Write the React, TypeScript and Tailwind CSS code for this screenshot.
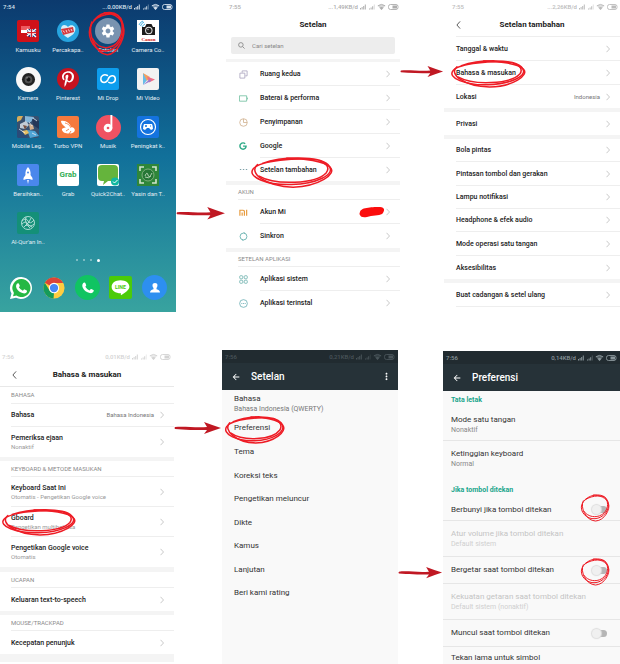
import React from "react";
import { FaPinterestP, FaGoogle } from "react-icons/fa";
import { MdSettings, MdArrowBack, MdMoreVert } from "react-icons/md";

function StatusBar({ time, speed, className }: { time: string; speed: string; className: string }) {
  return (
    <div className={"flex h-[13px] items-center text-[6px] leading-[8px] font-medium " + className}>
      <span className="flex-1">{time}</span>
      <span className="mr-px whitespace-nowrap">{speed}</span>
      <svg viewBox="0 0 40 8" className="h-2 w-10 shrink-0" fill="currentColor" aria-hidden="true">
        <path d="M1 6.5V5h1v1.5zM2.6 6.5V4h1v2.5zM4.2 6.5V3h1v3.5zM5.8 6.5V1.5h1v5z" />
        <path d="M10 6.5V5.5h1v1zM11.6 6.5V4.5h1v2zM13.2 6.5V3.2h1v3.3z" />
        <path d="M14.8 6.5V1.500h1v5z" opacity=".4" />
        <path d="M22.5 7 18.8 2.8Q22.5 0 26.2 2.8z" opacity=".5" />
        <path d="M22.5 7 20.5 4.8Q22.5 3.4 24.5 4.8z" />
        <path d="M18.8 2.8Q22.5 0 26.2 2.8" fill="none" stroke="currentColor" strokeWidth=".9" />
        <rect x="29.5" y="1.500" width="9.500" height="5" rx="2" fill="none" stroke="currentColor" strokeWidth=".9" />
        <rect x="33.5" y="2.500" width="4.500" height="3" />
      </svg>
    </div>
  );
}

function Scribble({ className, thin }: { className: string; thin?: boolean }) {
  return (
    <svg
      viewBox="0 0 100 100"
      preserveAspectRatio="none"
      className={"pointer-events-none absolute z-10 overflow-visible " + className}
      fill="none"
      stroke="#ee1c25"
      strokeWidth={thin ? 1 : 1.5}
      strokeLinecap="round"
      aria-hidden="true"
    >
      <path vectorEffect="non-scaling-stroke" d="M14 22C38-3 84-4 95 26C108 62 78 93 50 95C20 98-6 68 3 40C12 12 56 2 82 10" />
      <path vectorEffect="non-scaling-stroke" d="M8 26C-4 54 18 102 52 104C84 102 106 58 98 36C92 14 64 4 44 4" />
      <path vectorEffect="non-scaling-stroke" d="M10 66C30 98 80 94 93 54C98 34 92 20 84 12" />
    </svg>
  );
}

function Arrow() {
  return (
    <svg viewBox="0 0 48 14" className="w-full" aria-hidden="true">
      <path d="M1 6C10 5 22 7 33 6L30 1Q38 4 47 7Q38 10 30 13L33 9C22 9 10 9 1 8Q0 7 1 6z" fill="#c01823" />
    </svg>
  );
}

function Chevron() {
  return (
    <svg viewBox="0 0 4 8" className="h-2 w-1 shrink-0" fill="none" stroke="#c3c3c3" strokeWidth=".9" aria-hidden="true">
      <path d="M.5.8 3.5 4 .5 7.2" />
    </svg>
  );
}

function BackChevron() {
  return (
    <button aria-label="Kembali" className="absolute left-3 flex h-3 w-2 items-center">
      <svg viewBox="0 0 6 10" className="h-2 w-[5px]" fill="none" stroke="#444" strokeWidth="1.1">
        <path d="M5 .5 1 5l4 4.5" />
      </svg>
    </button>
  );
}

function Band({ h = "h-1" }: { h?: string }) {
  return <div className={"bg-[#f4f4f4] " + h} />;
}

function SectionHead({ children, h = "h-4", pad = "ml-3" }: { children: React.ReactNode; h?: string; pad?: string }) {
  return (
    <h3 className={"flex items-center border-b border-[#eeeeee] text-[6px] leading-[8px] text-[#8a8a8a] " + h + " " + pad}>
      {children}
    </h3>
  );
}

type RowProps = {
  label: string;
  sub?: string;
  value?: React.ReactNode;
  h?: string;
  last?: boolean;
  pad?: string;
  icon?: React.ReactNode;
};

function Row({ label, sub, value, h = "h-6", last, pad = "pl-3", icon }: RowProps) {
  return (
    <li>
      <button className={"flex w-full text-left " + h + " " + pad}>
        {icon && <span className="flex h-full w-[22px] shrink-0 items-center">{icon}</span>}
        <span className={"flex h-full min-w-0 flex-1 items-center pr-[10px] " + (last ? "" : "border-b border-[#eeeeee]")}>
          <span className="flex-1 whitespace-nowrap text-[7px] leading-[10px] font-medium text-[#222]">
            {label}
            {sub && <span className="block text-[6px] leading-[8px] font-normal text-[#999]">{sub}</span>}
          </span>
          {value && <span className="mr-[6px] text-[6px] leading-[8px] text-[#777]">{value}</span>}
          <Chevron />
        </span>
      </button>
    </li>
  );
}

/* ---------- home screen ---------- */

function Tile({ className, children }: { className: string; children?: React.ReactNode }) {
  return <span className={"relative flex size-[22px] items-center justify-center overflow-hidden " + className}>{children}</span>;
}

const apps: { name: string; icon: React.ReactNode }[] = [
  {
    name: "Kamusku",
    icon: (
      <Tile className="rounded-xs bg-[#cf1119]">
        <svg viewBox="0 0 22 22" className="size-full">
          <path d="M4 6h9v4H4z" fill="#ee5a5e" /><path d="M4 10h9v4l-2-1H4z" fill="#fff" />
          <path d="M10 9h9v8h-7l-2-2z" fill="#263b80" />
          <path d="m10 9 9 8M19 9l-9 7" stroke="#fff" strokeWidth="1.5" />
          <path d="M14.5 9v8M10 12.7h9" stroke="#fff" strokeWidth="2.4" />
          <path d="M14.5 9v8M10 12.7h9" stroke="#d5222a" strokeWidth="1.2" />
        </svg>
      </Tile>
    ),
  },
  {
    name: "Percakapa..",
    icon: (
      <Tile className="rounded-full bg-[#27a4df]">
        <svg viewBox="0 0 22 22" className="size-full">
          <path d="M4 9C4 4 9 4 11 7C14 3 20 6 18 11C17 15 13 16 11 18C8 16 4 14 4 9z" fill="#d8eef8" />
          <path d="m4 9 12-2 1 5-11 3z" fill="#d43a3f" />
          <path d="m6 10.5 1.5 2M9 10l1 2.5M11.5 9.5l1 2M14 9l1 2" stroke="#fff" strokeWidth=".8" />
        </svg>
      </Tile>
    ),
  },
  {
    name: "Setelan",
    icon: (
      <span className="flex size-[26px] items-center justify-center rounded-full bg-[#7993b0]">
        <MdSettings className="size-4 text-white" />
      </span>
    ),
  },
  {
    name: "Camera Co..",
    icon: (
      <Tile className="bg-white">
        <svg viewBox="0 0 22 22" className="size-full">
          <path d="M2 5q1-3 4-4M3.5 6q1-3 3.5-4M5 7q1-2 3-3" fill="none" stroke="#36a9de" strokeWidth=".9" />
          <path d="M5 7h3l1.5-3h5L16 7h2v8H5z" fill="#1c1c1c" />
          <circle cx="11.8" cy="10.5" r="3.7" fill="#e6e6e6" /><circle cx="11.8" cy="10.5" r="2.7" fill="#222" /><circle cx="11" cy="9.5" r=".8" fill="#aaa" />
          <text x="11.5" y="20.7" textAnchor="middle" fontSize="5" fontWeight="bold" fontFamily="Liberation Serif, serif" fill="#d41920">Canon</text>
        </svg>
      </Tile>
    ),
  },
  {
    name: "Kamera",
    icon: (
      <span className="size-[25px]">
        <svg viewBox="0 0 26 26" className="size-full">
          <circle cx="13" cy="13" r="13" fill="#f8f8f8" /><circle cx="13" cy="13" r="6.8" fill="#222" />
          <circle cx="13" cy="13" r="4" fill="#505050" /><circle cx="13" cy="13" r="2" fill="#151515" /><circle cx="11.5" cy="11.3" r=".8" fill="#888" />
        </svg>
      </span>
    ),
  },
  {
    name: "Pinterest",
    icon: <Tile className="rounded-full bg-[#c7131f]"><FaPinterestP className="size-4 text-white" /></Tile>,
  },
  {
    name: "Mi Drop",
    icon: (
      <Tile className="rounded-xs bg-[#0d9ded]">
        <svg viewBox="0 0 22 22" className="size-full" fill="none" stroke="#fff" strokeWidth="1.5" strokeLinecap="round">
          <path d="M10.5 7.5C7 5.5 3.5 8 3.8 11.3C4.3 15.5 9.5 15.3 11 11.5C12.5 7 17.5 6.5 18.3 10.5C18.8 14 15 16 11.8 14.3" />
        </svg>
      </Tile>
    ),
  },
  {
    name: "Mi Video",
    icon: (
      <Tile className="rounded-xs bg-[#f2f2f2]">
        <svg viewBox="0 0 22 22" className="size-full">
          <path d="M6 5v12l5-6z" fill="#69bce8" /><path d="m6 5 7 4-3 4z" fill="#f3a15e" /><path d="m10 8.5 8 3-6 3z" fill="#ee6f86" /><path d="m6 17 7-6 1 2z" fill="#9a7dd1" />
        </svg>
      </Tile>
    ),
  },
  {
    name: "Mobile Leg..",
    icon: (
      <Tile className="rounded-xs bg-[#38506f]">
        <svg viewBox="0 0 22 22" className="size-full">
          <path d="M0 0h6l-2 4-4 2z" fill="#d5ad5c" /><path d="m8 0 9 1-3 5-6 1z" fill="#83b7db" /><path d="m15 3 7 2v8l-6-4z" fill="#253859" />
          <path d="m3 8 6-3 3 4-4 4-5-1z" fill="#c3ccd6" /><path d="m6 9 4 1-2 4z" fill="#765143" /><path d="m12 8 4 1 1 4-4 1z" fill="#d6b28f" />
          <path d="M0 14l7 1 4 7H0z" fill="#2a4b79" /><path d="m10 14 8 1 4 5-9 2z" fill="#4fa4d5" /><path d="m5 15 5-1 2 3-4 2z" fill="#e5bd62" /><path d="m16 2 4 3M2 13l6 4M12 6l3 4M15 17l4 2" stroke="#e8eef5" strokeWidth=".8" />
        </svg>
      </Tile>
    ),
  },
  {
    name: "Turbo VPN",
    icon: (
      <Tile className="rounded-xs bg-[#f57a3d]">
        <svg viewBox="0 0 22 22" className="size-full">
          <path d="M4 5C9 4 13 8 14 11C17 11 19 14 17 16C14 18.5 6 18 5 14C4.5 12.5 7 11.5 9 11.5C7 10 4 8 4 5z" fill="#fff" />
          <path d="M8 7c4 1 5 3 6 5M9 15l3-2M12 18l2-3" fill="none" stroke="#f57a3d" strokeWidth=".9" />
        </svg>
      </Tile>
    ),
  },
  {
    name: "Musik",
    icon: (
      <span className="size-[25px]">
        <svg viewBox="0 0 26 26" className="size-full">
          <circle cx="13" cy="13" r="13" fill="#ef5262" /><circle cx="12.5" cy="13.5" r="4.5" fill="#fff" /><circle cx="12.5" cy="13.5" r="1.4" fill="#ef5262" />
          <path d="M15 0h2v14h-2z" fill="#fff" />
        </svg>
      </span>
    ),
  },
  {
    name: "Peningkat k..",
    icon: (
      <Tile className="rounded-xs bg-[#1473df]">
        <svg viewBox="0 0 22 22" className="size-full" fill="none" stroke="#fff">
          <circle cx="11" cy="11" r="7.5" strokeWidth="1.2" /><path d="M7 8h8q1 2 1 5l-2 1-2-2h-2l-2 2-2-1q0-3 1-5z" fill="#fff" stroke="none" />
          <path d="M8 10h2M9 9v2M13 10h1" stroke="#1473df" />
        </svg>
      </Tile>
    ),
  },
  {
    name: "Bersihkan..",
    icon: (
      <Tile className="rounded-xs bg-[#4a87ec]">
        <svg viewBox="0 0 22 22" className="size-full">
          <path d="M11 3q3 3 2.5 8l2 3v2l-3-1h-3l-3 1v-2l2-3Q8 6 11 3z" fill="#fff" /><circle cx="11" cy="8.5" r="1" fill="#4a87ec" /><path d="M10 16h2l-1 4z" fill="#e2eaff" />
        </svg>
      </Tile>
    ),
  },
  {
    name: "Grab",
    icon: <Tile className="rounded-xs bg-white text-[8px] leading-[10px] font-bold text-[#32ae54]">Grab</Tile>,
  },
  {
    name: "Quick2Chat..",
    icon: (
      <Tile className="rounded-xs bg-white">
        <svg viewBox="0 0 22 22" className="size-full">
          <path d="M5 1h12q4 0 4 4v8q0 4-4 4h-6l-5 4 1-4H5q-4 0-4-4V5q0-4 4-4z" fill="#65b43c" />
          <circle cx="18" cy="17.5" r="4" fill="#10b7a0" /><path d="m16 17.5 1.5 1.5 3-3" fill="none" stroke="#fff" />
        </svg>
      </Tile>
    ),
  },
  {
    name: "Yasin dan T..",
    icon: (
      <Tile className="bg-[#2f8639]">
        <svg viewBox="0 0 22 22" className="size-full" fill="none" stroke="#d1e4cd">
          <path d="M3 7V3h4M15 3h4v4M3 15v4h4M15 19h4v-4" strokeWidth="1.6" />
          <circle cx="11" cy="11" r="6" fill="#267635" stroke="#7caf7a" /><path d="M8 12q2-5 3-1t4-2M8 13q4 2 6-1" strokeWidth=".8" />
        </svg>
      </Tile>
    ),
  },
  {
    name: "Al-Qur'an In..",
    icon: (
      <Tile className="rounded-xs bg-[#149078]">
        <svg viewBox="0 0 22 22" className="size-full" fill="none" stroke="#bce3dc" strokeWidth=".9">
          <circle cx="11" cy="11" r="6.5" /><path d="M5 9q4-4 6 0t6-1M5 12q4-4 6 0t6 0M7 15q3-4 8 0M9 5q-2 6 4 11M14 6q-1 4-6 8" />
        </svg>
      </Tile>
    ),
  },
];

const handset =
  "M9 7.2Q9.6 7 9.9 7.7L10.7 9.6Q10.9 10 10.5 10.5L9.9 11.3Q11.3 13.8 13.9 14.8L14.9 13.6Q15.2 13.2 15.7 13.5L17.7 14.5Q18.1 14.7 18 15.2C17.7 17 15.8 17.7 14.2 17.3Q9.5 16.2 7.5 12.2C6.5 10 7.3 7.5 9 7.2z";

function HomeScreen() {
  return (
    <section aria-label="Layar utama" className="flex flex-col self-start bg-linear-to-b from-[#0c3a6e] via-[#11709a] to-[#38a39f] text-white">
      <StatusBar time="7:54" speed="...0,00KB/d" className="pr-[3px] pl-[3px] text-[#d5e0ec]" />
      <div className="grid grid-cols-4 gap-y-[5px] px-2 pt-1">
        {apps.map((a) => (
          <button key={a.name} className="flex h-[43px] flex-col items-center">
            <span className="flex h-7 items-center">{a.icon}</span>
            <span className="whitespace-nowrap text-[6px] leading-[10px] text-[#e3edf4]">{a.name}</span>
          </button>
        ))}
      </div>
      <div className="mt-[3px] flex h-[10px] items-center justify-center gap-[5px]">
        <i className="size-[2px] rounded-full bg-white/50" />
        <i className="size-[2px] rounded-full bg-white/50" />
        <i className="size-[2px] rounded-full bg-white/50" />
        <i className="size-[3px] rounded-full bg-white" />
      </div>
      <nav aria-label="Dok" className="mt-[10px] flex items-center justify-between px-[9px] pb-3">
        <button aria-label="WhatsApp">
          <svg viewBox="0 0 24 24" className="size-6">
            <path d="M12.5 1a11 11 0 1 1-5.500 20.800L1 23l1.500-5.500A11 11 0 0 1 12.500 1z" fill="#fff" />
            <path d="M12.5 3a9 9 0 1 1-5 16.500L4 20.300l.9-3.300A9 9 0 0 1 12.500 3z" fill="#25b844" />
            <path d={handset} fill="#fff" />
          </svg>
        </button>
        <button aria-label="Chrome">
          <svg viewBox="0 0 24 24" className="size-[22px]">
            <circle cx="12" cy="12" r="11.5" fill="#ffcd40" />
            <path d="M12 12 2 6.300A11.500 11.500 0 0 1 22 6.500H12z" fill="#dc4437" />
            <path d="M2 6.300 7.300 15 12 17.500 11.500 23.500A11.500 11.500 0 0 1 2 6.300z" fill="#159b59" />
            <circle cx="12" cy="12" r="5.6" fill="#fff" /><circle cx="12" cy="12" r="4.5" fill="#4687f4" />
          </svg>
        </button>
        <button aria-label="Telepon" className="flex size-[25px] items-center justify-center rounded-full bg-[#10c462]">
          <svg viewBox="0 0 24 24" className="size-[25px]"><path d={handset} fill="#fff" /></svg>
        </button>
        <button aria-label="LINE">
          <svg viewBox="0 0 22 22" className="size-[23px]">
            <rect width="22" height="22" rx="2" fill="#4bcb09" /><path d="M11 4c5 0 8.500 2.700 8.500 6.200 0 3-4 5.500-8 8.300q-.5-1 0-2C6 16.500 2.500 14 2.500 10.200 2.500 6.700 6 4 11 4z" fill="#fff" />
            <text x="11" y="12" textAnchor="middle" fontSize="5" fontWeight="bold" fill="#4bcb09">LINE</text>
          </svg>
        </button>
        <button aria-label="Kontak" className="flex size-[25px] items-center justify-center rounded-full bg-[#2d8ff0]">
          <svg viewBox="0 0 12 12" className="size-3" fill="#fff"><path d="M6 1C9 1 9 4 7.500 6V7.200Q11 8 11 10.500H1Q1 8 4.500 7.200V6C3 4 3 1 6 1z" /></svg>
        </button>
      </nav>
    </section>
  );
}

/* ---------- settings lists ---------- */

function LineIcon({ color, children }: { color: string; children: React.ReactNode }) {
  return (
    <svg viewBox="0 0 10 10" className="ml-px size-[9px]" fill="none" stroke={color} strokeWidth=".9" aria-hidden="true">
      {children}
    </svg>
  );
}

function MainSettings() {
  return (
    <section className="min-w-0">
      <StatusBar time="7:55" speed="...1,49KB/d" className="pr-px pl-[3px] text-[#adadad]" />
      <h2 className="flex h-6 items-center justify-center text-[8px] leading-[10px] font-bold text-[#222]">Setelan</h2>
      <label className="mx-[5px] flex h-[17px] items-center rounded-xs bg-[#ededed] pl-[7px]">
        <svg viewBox="0 0 8 8" className="mr-[7px] size-[7px] shrink-0" fill="none" stroke="#888" aria-hidden="true"><circle cx="3.3" cy="3.3" r="2.6" /><path d="m5.300 5.300 2.200 2.200" /></svg>
        <input type="search" aria-label="Cari setelan" placeholder="Cari setelan" className="w-full min-w-0 bg-transparent text-[6px] leading-[8px] outline-none placeholder:text-[#888]" />
      </label>
      <div className="mt-[5px]"><Band h="h-[3px]" /></div>
      <ul>
        <Row label="Ruang kedua" icon={<LineIcon color="#aaa4bd"><path d="M3.500 1H9v5.500H7M3.500 1v2M1 3.500h5.500V9H1z" /></LineIcon>} />
        <Row label="Baterai & performa" icon={<LineIcon color="#6dbd9d"><path d="M.5 2h8v6h-8zM9.500 4v2" /></LineIcon>} />
        <Row label="Penyimpanan" icon={<LineIcon color="#d0b18e"><circle cx="5" cy="5" r="4.2" /><path d="M5 1v4h4" /></LineIcon>} />
        <Row label="Google" icon={<FaGoogle className="ml-px size-2 text-[#2eaa87]" />} />
        <Row h="h-[23px]" last label="Setelan tambahan" icon={<LineIcon color="#7da0a8"><path d="M1 5h1.500M4.300 5h1.500M7.600 5h1.500" strokeWidth="1.3" /></LineIcon>} />
      </ul>
      <Band />
      <SectionHead h="h-[15px]">AKUN</SectionHead>
      <ul>
        <Row
          label="Akun Mi"
          value={<svg viewBox="0 0 26 12" className="-mr-1 h-3 w-[26px]"><path d="M2 6C3 1 16 1 22 1C27 1 27 5 24 8C21 10 14 9 9 11Q3 12 2 9Q1 8 2 6z" fill="#fb0d0d" /></svg>}
          icon={<LineIcon color="#e79a3c"><path d="M1 8.500v-6h3.500Q6 2.500 6 4v4.500M3.500 5v3.500M8.500 2v6.500" strokeWidth="1.3" /></LineIcon>}
        />
        <Row last label="Sinkron" icon={<LineIcon color="#5aaba8"><circle cx="5" cy="5" r="3.8" /><path d="m5 .2 1.500 1M5 9.800l-1.500-1" /></LineIcon>} />
      </ul>
      <Band />
      <SectionHead h="h-[15px]">SETELAN APLIKASI</SectionHead>
      <ul>
        <Row label="Aplikasi sistem" icon={<LineIcon color="#6ab0ac"><rect x=".8" y=".8" width="3.4" height="3.4" rx="1" /><rect x="5.8" y=".8" width="3.4" height="3.4" rx="1" /><rect x=".8" y="5.8" width="3.4" height="3.4" rx="1" /><rect x="5.8" y="5.8" width="3.4" height="3.4" rx="1" /></LineIcon>} />
        <Row last label="Aplikasi terinstal" icon={<LineIcon color="#6aaeb5"><circle cx="5" cy="5" r="4.3" /><path d="M2.500 5h5" strokeDasharray="1.2 .7" /></LineIcon>} />
      </ul>
    </section>
  );
}

function ExtraSettings() {
  return (
    <section className="min-w-0">
      <StatusBar time="7:55" speed="...2,26KB/d" className="pr-[2px] pl-2 text-[#bbbbbb]" />
      <header className="relative ml-3 flex h-6 items-center justify-center border-b border-[#eeeeee] pr-3">
        <span className="absolute inset-y-0 -left-3 flex items-center"><BackChevron /></span>
        <h2 className="text-[8px] leading-[10px] font-bold text-[#222]">Setelan tambahan</h2>
      </header>
      <ul>
        <Row label="Tanggal & waktu" />
        <Row label="Bahasa & masukan" />
        <Row h="h-[23px]" last label="Lokasi" value="Indonesia" />
      </ul>
      <Band />
      <ul><Row h="h-[23px]" last label="Privasi" /></ul>
      <Band />
      <ul>
        <Row h="h-[23px]" label="Bola pintas" />
        <Row label="Pintasan tombol dan gerakan" />
        <Row h="h-[23px]" label="Lampu notifikasi" />
        <Row h="h-[23px]" label="Headphone & efek audio" />
        <Row label="Mode operasi satu tangan" />
        <Row h="h-[23px]" last label="Aksesibilitas" />
      </ul>
      <Band />
      <ul><Row label="Buat cadangan & setel ulang" /></ul>
    </section>
  );
}

function LanguageInput() {
  return (
    <section className="min-w-0">
      <StatusBar time="7:56" speed="0,01KB/d" className="pr-[3px] pl-[2px] text-[#d3d3d3]" />
      <header className="relative flex h-6 items-center justify-center border-b border-[#e8e8e8]">
        <BackChevron />
        <h2 className="text-[8px] leading-[10px] font-bold text-[#222]">Bahasa & masukan</h2>
      </header>
      <SectionHead h="h-[17px]" pad="ml-[11px]">BAHASA</SectionHead>
      <ul>
        <Row h="h-[23px]" pad="pl-[11px]" label="Bahasa" value="Bahasa Indonesia" />
        <Row h="h-[30px]" pad="pl-[11px]" last label="Pemeriksa ejaan" sub="Nonaktif" />
      </ul>
      <Band />
      <SectionHead pad="ml-[11px]">KEYBOARD & METODE MASUKAN</SectionHead>
      <ul>
        <Row h="h-[30px]" pad="pl-[11px]" label="Keyboard Saat Ini" sub="Otomatis - Pengetikan Google voice" />
        <Row h="h-[30px]" pad="pl-[11px]" label="Gboard" sub="Pengetikan multibahasa" />
        <Row h="h-[30px]" pad="pl-[11px]" last label="Pengetikan Google voice" sub="Otomatis" />
      </ul>
      <Band h="h-[5px]" />
      <SectionHead pad="ml-[11px]">UCAPAN</SectionHead>
      <ul><Row h="h-[23px]" pad="pl-[11px]" last label="Keluaran text-to-speech" /></ul>
      <Band />
      <SectionHead pad="ml-[11px]">MOUSE/TRACKPAD</SectionHead>
      <ul><Row h="h-[23px]" pad="pl-[11px]" last label="Kecepatan penunjuk" /></ul>
      <Band h="h-2" />
    </section>
  );
}

function DarkHeader({ title, menu, speed, status }: { title: string; menu?: boolean; speed: string; status: string }) {
  return (
    <header className="bg-[#263238] text-white">
      <StatusBar time="7:56" speed={speed} className={"bg-[#212b30] pr-[3px] pl-[3px] " + status} />
      <div className="flex h-[27px] items-center pr-[6px] pl-[9px]">
        <button aria-label="Kembali"><MdArrowBack className="size-[10px]" /></button>
        <h2 className="ml-[10px] flex-1 text-[10px] leading-[12px] font-medium">{title}</h2>
        {menu && <button aria-label="Menu"><MdMoreVert className="size-[11px]" /></button>}
      </div>
    </header>
  );
}

function GboardSettings() {
  const items: [string, string][] = [
    ["Preferensi", "h-6"],
    ["Tema", "h-6"],
    ["Koreksi teks", "h-[23px]"],
    ["Pengetikan meluncur", "h-6"],
    ["Dikte", "h-[23px]"],
    ["Kamus", "h-6"],
    ["Lanjutan", "h-[23px]"],
    ["Beri kami rating", "h-6"],
  ];
  return (
    <section className="min-w-0 bg-[#f9f9f9]">
      <DarkHeader title="Setelan" menu speed="0,21KB/d" status="text-[#4a555a]" />
      <ul className="text-[8px] leading-[10px] text-[#333]">
        <li>
          <button className="block w-full pt-1 pb-[2px] pl-3 text-left">
            <span className="block">Bahasa</span>
            <span className="block text-[7px] text-[#777]">Bahasa Indonesia (QWERTY)</span>
          </button>
        </li>
        {items.map(([t, h]) => (
          <li key={t}><button className={"flex w-full items-center pl-3 text-left " + h}>{t}</button></li>
        ))}
      </ul>
    </section>
  );
}

function Toggle({ id }: { id: string }) {
  return (
    <input
      id={id}
      type="checkbox"
      role="switch"
      className="relative h-[7px] w-[15px] shrink-0 appearance-none rounded-full bg-linear-to-r from-transparent from-30% to-[#b5b5b5] to-30% before:absolute before:-top-px before:left-0 before:size-[9px] before:rounded-full before:bg-[#f0f0f0] before:shadow-[0_0_1px_1px_#dedede]"
    />
  );
}

function Pref({ id, label, sub, off, h, last }: { id?: string; label: string; sub?: string; off?: boolean; h: string; last?: boolean }) {
  const body = (
    <span className={"flex-1 whitespace-nowrap text-[8px] leading-[10px] " + (off ? "text-[#c4c4c4]" : "text-[#333]")}>
      {label}
      {sub && <span className={"block text-[7px] " + (off ? "text-[#cfcfcf]" : "text-[#888]")}>{sub}</span>}
    </span>
  );
  const cls = "flex w-full items-center pr-[13px] pl-2 text-left " + h + (last ? "" : " border-b border-[#e6e6e6]");
  return id ? (
    <label htmlFor={id} className={cls}>{body}<Toggle id={id} /></label>
  ) : (
    <button disabled={off} className={cls}>{body}</button>
  );
}

function Preferences() {
  return (
    <section className="min-w-0 bg-[#f9f9f9]">
      <DarkHeader title="Preferensi" speed="0,14KB/d" status="text-[#8b979c]" />
      <h3 className="flex h-[18px] items-center pl-2 text-[7px] leading-[10px] font-bold text-[#1aa58c]">Tata letak</h3>
      <Pref h="h-8" label="Mode satu tangan" sub="Nonaktif" />
      <Pref h="h-9" label="Ketinggian keyboard" sub="Normal" last />
      <h3 className="flex h-[22px] items-end pb-1 pl-2 text-[7px] leading-[10px] font-bold text-[#1aa58c]">Jika tombol ditekan</h3>
      <Pref id="berbunyi" h="h-[22px]" label="Berbunyi jika tombol ditekan" />
      <Pref h="h-9" label="Atur volume jika tombol ditekan" sub="Default sistem" off />
      <Pref id="bergetar" h="h-[27px]" label="Bergetar saat tombol ditekan" />
      <Pref h="h-9" label="Kekuatan getaran saat tombol ditekan" sub="Default sistem (nonaktif)" off />
      <Pref id="muncul" h="h-[27px]" label="Muncul saat tombol ditekan" />
      <button className="flex h-[17px] w-full items-end pb-px pl-2 text-[8px] leading-[10px] text-[#333]">Tekan lama untuk simbol</button>
    </section>
  );
}

export default function App() {
  return (
    <main className="overflow-hidden bg-white font-['Roboto',sans-serif]">
      <div className="relative grid grid-cols-[176fr_50fr_174fr_44fr_176fr]">
        <HomeScreen />
        <div className="pt-[206px]"><Arrow /></div>
        <MainSettings />
        <div className="pt-[65px]"><Arrow /></div>
        <ExtraSettings />
        <Scribble className="top-[11px] left-[89px] h-[42px] w-[35px]" />
        <Scribble className="top-[157px] left-[251px] h-[29px] w-[81px]" />
        <Scribble className="top-[60px] left-[451px] h-[26px] w-[74px]" />
      </div>
      <div className="relative mt-[35px] grid grid-cols-[174fr_48fr_176fr_45fr_177fr]">
        <LanguageInput />
        <div className="pt-[71px]"><Arrow /></div>
        <GboardSettings />
        <div className="pt-[216px]"><Arrow /></div>
        <div className="mt-px grid"><Preferences /></div>
        <Scribble className="top-[159px] left-[2px] h-[25px] w-[73px]" />
        <Scribble className="top-[66px] left-[225px] h-[26px] w-[59px]" />
        <Scribble thin className="top-[144px] left-[581px] h-[26px] w-[28px]" />
        <Scribble thin className="top-[208px] left-[581px] h-[26px] w-[28px]" />
      </div>
    </main>
  );
}
